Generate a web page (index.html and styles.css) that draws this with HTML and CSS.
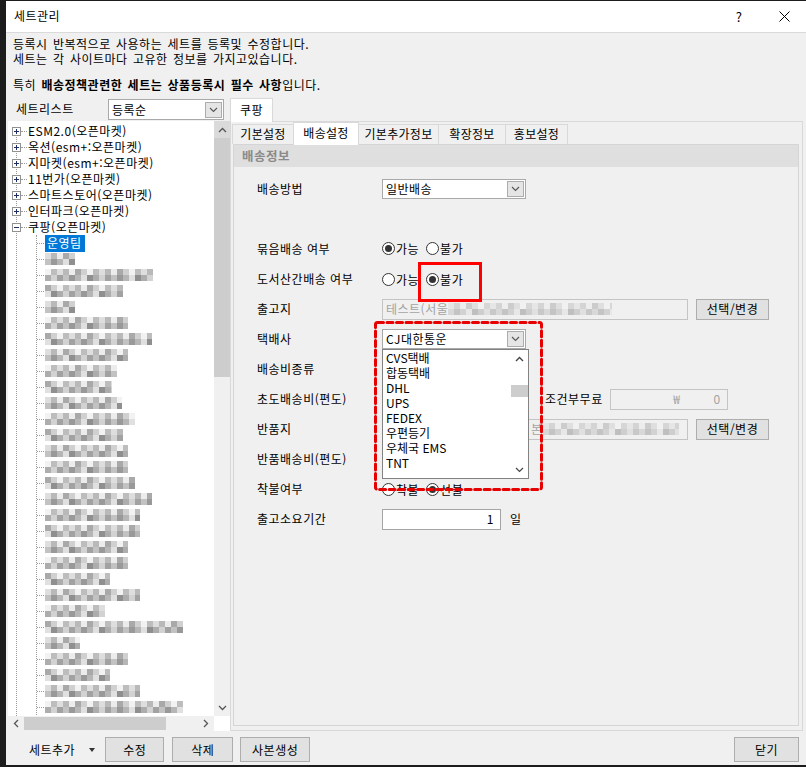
FILE: index.html
```html
<!DOCTYPE html>
<html lang="ko">

<head>
    <meta charset="UTF-8">
    <title>세트관리</title>
    <link rel="stylesheet" href="styles.css">
</head>

<body>
    <div class="window">
        <div class="titlebar">
            <span class="title">세트관리</span>
            <span class="cap help">?</span>
            <span class="cap close">
                <svg width="11" height="11" viewBox="0 0 11 11"><path d="M0.5 0.5l10 10M10.5 0.5l-10 10" stroke="#000" stroke-width="1" fill="none"/></svg>
            </span>
        </div>

        <div class="intro">
            <p>등록시 반복적으로 사용하는 세트를 등록및 수정합니다.</p>
            <p>세트는 각 사이트마다 고유한 정보를 가지고있습니다.</p>
            <p class="notice">특히 <b>배송정책관련한 세트는 상품등록시 필수 사항</b>입니다.</p>
        </div>

        <div class="main">
            <!-- 세트 리스트 -->
            <div class="left">
                <div class="list-head">
                    <span class="list-label">세트리스트</span>
                    <div class="combo sort">
                        <span class="combo-text">등록순</span>
                        <span class="drop"><svg width="9" height="6" viewBox="0 0 9 6"><path d="M1 1l3.5 3.5L8 1" fill="none" stroke="#555" stroke-width="1.1"/></svg></span>
                    </div>
                </div>
                <div class="tree">
                    <div class="tree-items">
                        <div class="node"><span class="exp plus"></span><span class="hline"></span><span class="node-text">ESM2.0(오픈마켓)</span></div>
                        <div class="node"><span class="exp plus"></span><span class="hline"></span><span class="node-text">옥션(esm+:오픈마켓)</span></div>
                        <div class="node"><span class="exp plus"></span><span class="hline"></span><span class="node-text">지마켓(esm+:오픈마켓)</span></div>
                        <div class="node"><span class="exp plus"></span><span class="hline"></span><span class="node-text">11번가(오픈마켓)</span></div>
                        <div class="node"><span class="exp plus"></span><span class="hline"></span><span class="node-text">스마트스토어(오픈마켓)</span></div>
                        <div class="node"><span class="exp plus"></span><span class="hline"></span><span class="node-text">인터파크(오픈마켓)</span></div>
                        <div class="node"><span class="exp"></span><span class="hline"></span><span class="node-text">쿠팡(오픈마켓)</span></div>
                        <div class="kids">
                            <div class="kid"><span class="hline"></span><span class="node-text selected">운영팀</span></div>
                            <div class="kid"><span class="hline"></span><span class="mosaic" style="width:30px"></span></div>
                            <div class="kid"><span class="hline"></span><span class="mosaic" style="width:108px"></span></div>
                            <div class="kid"><span class="hline"></span><span class="mosaic" style="width:78px"></span></div>
                            <div class="kid"><span class="hline"></span><span class="mosaic" style="width:30px"></span></div>
                            <div class="kid"><span class="hline"></span><span class="mosaic" style="width:83px"></span></div>
                            <div class="kid"><span class="hline"></span><span class="mosaic" style="width:107px"></span></div>
                            <div class="kid"><span class="hline"></span><span class="mosaic" style="width:83px"></span></div>
                            <div class="kid"><span class="hline"></span><span class="mosaic" style="width:72px"></span></div>
                            <div class="kid"><span class="hline"></span><span class="mosaic" style="width:67px"></span></div>
                            <div class="kid"><span class="hline"></span><span class="mosaic" style="width:77px"></span></div>
                            <div class="kid"><span class="hline"></span><span class="mosaic" style="width:90px"></span></div>
                            <div class="kid"><span class="hline"></span><span class="mosaic" style="width:78px"></span></div>
                            <div class="kid"><span class="hline"></span><span class="mosaic" style="width:83px"></span></div>
                            <div class="kid"><span class="hline"></span><span class="mosaic" style="width:83px"></span></div>
                            <div class="kid"><span class="hline"></span><span class="mosaic" style="width:90px"></span></div>
                            <div class="kid"><span class="hline"></span><span class="mosaic" style="width:107px"></span></div>
                            <div class="kid"><span class="hline"></span><span class="mosaic" style="width:95px"></span></div>
                            <div class="kid"><span class="hline"></span><span class="mosaic" style="width:95px"></span></div>
                            <div class="kid"><span class="hline"></span><span class="mosaic" style="width:83px"></span></div>
                            <div class="kid"><span class="hline"></span><span class="mosaic" style="width:83px"></span></div>
                            <div class="kid"><span class="hline"></span><span class="mosaic" style="width:65px"></span></div>
                            <div class="kid"><span class="hline"></span><span class="mosaic" style="width:95px"></span></div>
                            <div class="kid"><span class="hline"></span><span class="mosaic" style="width:60px"></span></div>
                            <div class="kid"><span class="hline"></span><span class="mosaic" style="width:138px"></span></div>
                            <div class="kid"><span class="hline"></span><span class="mosaic" style="width:35px"></span></div>
                            <div class="kid"><span class="hline"></span><span class="mosaic" style="width:83px"></span></div>
                            <div class="kid"><span class="hline"></span><span class="mosaic" style="width:65px"></span></div>
                            <div class="kid"><span class="hline"></span><span class="mosaic" style="width:95px"></span></div>
                            <div class="kid"><span class="hline"></span><span class="mosaic" style="width:138px"></span></div>
                        </div>
                    </div>
                    <div class="vscroll">
                        <span class="arrow up"><svg width="9" height="6" viewBox="0 0 9 6"><path d="M1 5l3.5-3.5L8 5" fill="none" stroke="#555" stroke-width="1.3"/></svg></span>
                        <span class="thumb"></span>
                        <span class="track"></span>
                        <span class="arrow"><svg width="9" height="6" viewBox="0 0 9 6"><path d="M1 1l3.5 3.5L8 1" fill="none" stroke="#555" stroke-width="1.3"/></svg></span>
                    </div>
                    <div class="hscroll">
                        <span class="arrow"><svg width="6" height="9" viewBox="0 0 6 9"><path d="M5 1L1.5 4.5 5 8" fill="none" stroke="#555" stroke-width="1.3"/></svg></span>
                        <span class="thumb"></span>
                        <span class="track"></span>
                        <span class="arrow"><svg width="6" height="9" viewBox="0 0 6 9"><path d="M1 1l3.5 3.5L1 8" fill="none" stroke="#555" stroke-width="1.3"/></svg></span>
                    </div>
                    <div class="corner"></div>
                </div>
            </div>

            <!-- 사이트별 설정 -->
            <div class="right">
                <div class="site-tabs">
                    <span class="site-tab">쿠팡</span>
                </div>
                <div class="site-page">
                    <div class="tabs">
                        <span class="tab">기본설정</span>
                        <span class="tab active">배송설정</span>
                        <span class="tab">기본추가정보</span>
                        <span class="tab">확장정보</span>
                        <span class="tab">홍보설정</span>
                    </div>
                    <div class="tab-page">
                        <div class="section-head">배송정보</div>
                        <div class="form">
                            <div class="row">
                                <span class="label">배송방법</span>
                                <div class="combo">
                                    <span class="combo-text">일반배송</span>
                                    <span class="drop"><svg width="9" height="6" viewBox="0 0 9 6"><path d="M1 1l3.5 3.5L8 1" fill="none" stroke="#555" stroke-width="1.1"/></svg></span>
                                </div>
                            </div>

                            <div class="row gap-before">
                                <span class="label">묶음배송 여부</span>
                                <span class="option"><span class="radio on"></span>가능</span>
                                <span class="option"><span class="radio"></span>불가</span>
                            </div>

                            <div class="row">
                                <span class="label">도서산간배송 여부</span>
                                <span class="option"><span class="radio"></span>가능</span>
                                <span class="option marked"><span class="radio on"></span>불가</span>
                            </div>

                            <div class="row">
                                <span class="label">출고지</span>
                                <span class="field disabled wide">테스트(서울<span class="mosaic light" style="width:164px"></span></span>
                                <span class="btn">선택/변경</span>
                            </div>

                            <div class="row">
                                <span class="label">택배사</span>
                                <div class="combo-wrap">
                                    <div class="combo">
                                        <span class="combo-text">CJ대한통운</span>
                                        <span class="drop"><svg width="9" height="6" viewBox="0 0 9 6"><path d="M1 1l3.5 3.5L8 1" fill="none" stroke="#555" stroke-width="1.1"/></svg></span>
                                    </div>
                                    <div class="droplist">
                                        <div class="items">
                                            <div>CVS택배</div>
                                            <div>합동택배</div>
                                            <div>DHL</div>
                                            <div>UPS</div>
                                            <div>FEDEX</div>
                                            <div>우편등기</div>
                                            <div>우체국 EMS</div>
                                            <div>TNT</div>
                                        </div>
                                        <div class="list-scroll">
                                            <span class="arrow"><svg width="9" height="6" viewBox="0 0 9 6"><path d="M1 5l3.5-3.5L8 5" fill="none" stroke="#444" stroke-width="1.4"/></svg></span>
                                            <span class="thumb"></span>
                                            <span class="track"></span>
                                            <span class="arrow"><svg width="9" height="6" viewBox="0 0 9 6"><path d="M1 1l3.5 3.5L8 1" fill="none" stroke="#444" stroke-width="1.2"/></svg></span>
                                        </div>
                                    </div>
                                    <svg class="dash-mark" width="169" height="170" viewBox="0 0 169 170"><rect x="1.5" y="1.5" width="166" height="167" rx="2" fill="none" stroke="#e60000" stroke-width="3" stroke-dasharray="6 3.5" stroke-linecap="round"/></svg>
                                </div>
                            </div>

                            <div class="row">
                                <span class="label">배송비종류</span>
                            </div>

                            <div class="row">
                                <span class="label">초도배송비(편도)</span>
                                <span class="cond">조건부무료</span>
                                <span class="field disabled money"><span>₩</span><span class="amount">0</span></span>
                            </div>

                            <div class="row">
                                <span class="label">반품지</span>
                                <span class="field disabled wide"><span class="hidden-part">본</span><span class="mosaic light" style="width:136px"></span></span>
                                <span class="btn">선택/변경</span>
                            </div>

                            <div class="row">
                                <span class="label">반품배송비(편도)</span>
                            </div>

                            <div class="row">
                                <span class="label">착불여부</span>
                                <span class="option"><span class="radio"></span>착불</span>
                                <span class="option"><span class="radio on"></span>선불</span>
                            </div>

                            <div class="row">
                                <span class="label">출고소요기간</span>
                                <span class="field days">1</span>
                                <span class="unit">일</span>
                            </div>
                        </div>
                    </div>
                </div>
            </div>
        </div>

        <div class="footer">
            <span class="add">세트추가</span>
            <span class="caret"></span>
            <span class="btn edit">수정</span>
            <span class="btn del">삭제</span>
            <span class="btn copy">사본생성</span>
            <span class="btn close-btn">닫기</span>
        </div>
    </div>
</body>

</html>
```

FILE: styles.css
```css
* {
    box-sizing: border-box;
}

body {
    margin: 0;
    background: #1c1c1c;
    font-family: "Noto Sans CJK KR", "Noto Sans", sans-serif;
    font-size: 12px;
    letter-spacing: 0.5px;
    color: #000;
}

p {
    margin: 0;
}

.window {
    margin: 1px 0 0 6px;
    width: 800px;
    height: 764px;
    background: #f0f0f0;
    display: flex;
    flex-direction: column;
}

/* title bar */
.titlebar {
    height: 32px;
    flex-shrink: 0;
    background: #fff;
    border-bottom: 1px solid #dadada;
    display: flex;
    align-items: center;
    padding-left: 8px;
}

.title {
    padding-bottom: 2px;
}

.cap {
    width: 46px;
    height: 31px;
    display: flex;
    align-items: center;
    justify-content: center;
}

.help {
    margin-left: auto;
    font-size: 13px;
    padding-bottom: 1px;
}

.close {
    width: 44px;
    padding-bottom: 1px;
}

/* intro text */
.intro {
    padding: 3px 7px 0;
    line-height: 15px;
    word-spacing: 1.5px;
}

.notice {
    margin-top: 11px;
}

/* main area */
.main {
    margin-top: 6px;
    padding-left: 2px;
    height: 633px;
    display: flex;
}

.left {
    width: 222px;
}

.right {
    width: 573px;
}

.list-head {
    height: 23px;
    display: flex;
    align-items: center;
}

.list-label {
    width: 100px;
    padding-left: 8px;
    padding-bottom: 2px;
}

.combo {
    width: 144px;
    height: 20px;
    background: #fff;
    border: 1px solid #a9a9a9;
    display: flex;
    align-items: center;
}

.combo.sort {
    width: 116px;
    height: 21px;
}

.combo-text {
    flex: 1;
    padding-left: 3px;
    padding-bottom: 1px;
}

.drop {
    width: 17px;
    height: 16px;
    margin-right: 1px;
    background: #e5e5e5;
    border: 1px solid #acacac;
    display: flex;
    align-items: center;
    justify-content: center;
}

/* tree */
.tree {
    height: 610px;
    background: #fff;
    display: grid;
    grid-template-columns: 206px 16px;
    grid-template-rows: 595px 15px;
}

.tree-items {
    position: relative;
    overflow: hidden;
    padding-top: 2px;
}

.tree-items::before {
    content: "";
    position: absolute;
    left: 8px;
    top: 10px;
    bottom: 0;
    border-left: 1px dotted #9a9a9a;
}

.node,
.kid {
    height: 16px;
    display: flex;
    align-items: center;
    white-space: nowrap;
}

.node {
    padding-left: 4px;
}

.exp {
    position: relative;
    width: 9px;
    height: 9px;
    background: #fff;
    border: 1px solid #919191;
    flex-shrink: 0;
}

.exp::before {
    content: "";
    position: absolute;
    left: 1px;
    top: 3px;
    width: 5px;
    height: 1px;
    background: #1d2b66;
}

.exp.plus::after {
    content: "";
    position: absolute;
    left: 3px;
    top: 1px;
    width: 1px;
    height: 5px;
    background: #1d2b66;
}

.hline {
    width: 6px;
    border-top: 1px dotted #9a9a9a;
    margin-right: 1px;
}

.node-text {
    line-height: 16px;
    padding-bottom: 1px;
}

.kids {
    position: relative;
}

.kids::before {
    content: "";
    position: absolute;
    left: 28px;
    top: 0;
    bottom: 0;
    border-left: 1px dotted #9a9a9a;
}

.kid {
    padding-left: 29px;
}

.kid .hline {
    width: 7px;
    margin-right: 1px;
}

.selected {
    background: #0078d7;
    color: #fff;
    padding: 0 3px 1px 2px;
}

/* blurred (pixelated) names */
.mosaic {
    display: inline-block;
    height: 12px;
    background-image:
        repeating-linear-gradient(90deg, #dedede 0 6px, #b9b9b9 6px 12px, #ececec 12px 18px, #a9a9a9 18px 24px, #d0d0d0 24px 30px, #f2f2f2 30px 36px, #bdbdbd 36px 42px),
        repeating-linear-gradient(90deg, #c2c2c2 0 6px, #999 6px 12px, #b6b6b6 12px 18px, #e0e0e0 18px 24px, #8f8f8f 24px 30px, #adadad 30px 36px, #d2d2d2 36px 42px, #a2a2a2 42px 48px);
    background-size: 42px 6px, 48px 12px;
    background-repeat: repeat-x;
}

.kid:nth-child(3n) .mosaic {
    background-position: 12px 0, 18px 0;
}

.kid:nth-child(3n+1) .mosaic {
    background-position: 24px 0, 30px 0;
}

.mosaic.light {
    opacity: 0.5;
    vertical-align: middle;
}

.vscroll {
    background: #f0f0f0;
    display: flex;
    flex-direction: column;
}

.vscroll .arrow {
    height: 17px;
    display: flex;
    align-items: center;
    justify-content: center;
    flex-shrink: 0;
}

.vscroll .up {
    background: #dadada;
}

.vscroll .thumb {
    height: 239px;
    background: #cdcdcd;
}

.vscroll .track,
.hscroll .track {
    flex: 1;
}

.hscroll {
    background: #f0f0f0;
    display: flex;
    align-items: center;
}

.hscroll .arrow {
    width: 16px;
    display: flex;
    justify-content: center;
}

.hscroll .thumb {
    width: 142px;
    height: 13px;
    background: #cdcdcd;
}

.corner {
    background: #fff;
}

/* site tabs */
.site-tabs {
    height: 23px;
    display: flex;
    align-items: flex-end;
}

.site-tab {
    position: relative;
    z-index: 1;
    width: 43px;
    height: 24px;
    margin-bottom: -1px;
    padding-left: 9px;
    line-height: 22px;
    background: #fff;
    border: 1px solid #d9d9d9;
    border-bottom: none;
}

.site-page {
    height: 610px;
    border: 1px solid #d9d9d9;
    padding: 1px 0 0 1px;
}

.tabs {
    height: 21px;
    display: flex;
    align-items: flex-end;
}

.tab {
    height: 20px;
    line-height: 18px;
    text-align: center;
    background: #f0f0f0;
    border: 1px solid #d9d9d9;
    border-bottom: none;
    margin-right: -1px;
    letter-spacing: 0.3px;
}

.tab:nth-child(1) { width: 62px; }
.tab:nth-child(2) { width: 66px; }
.tab:nth-child(3) { width: 81px; }
.tab:nth-child(4) { width: 68px; }
.tab:nth-child(5) { width: 63px; }

.tab.active {
    position: relative;
    z-index: 1;
    height: 23px;
    margin-bottom: -1px;
    line-height: 19px;
    background: #fff;
}

.tab-page {
    margin-left: 1px;
    width: 566px;
    height: 582px;
    border: 1px solid #d5d5d5;
}

.section-head {
    height: 22px;
    line-height: 21px;
    padding-left: 8px;
    background: #dfdfdf;
    color: #8a8a8a;
    font-weight: bold;
    font-size: 12.5px;
}

/* form */
.form {
    padding: 7px 0 0 23px;
}

.row {
    height: 30px;
    display: flex;
    align-items: center;
}

.row.gap-before {
    margin-top: 29px;
    height: 31px;
}

.label {
    width: 125px;
    flex-shrink: 0;
    padding-bottom: 1px;
}

.option {
    position: relative;
    display: inline-flex;
    align-items: center;
    gap: 1px;
    margin-right: 7px;
    height: 16px;
}

.radio {
    position: relative;
    width: 13px;
    height: 13px;
    border-radius: 50%;
    border: 1px solid #333;
    background: #fff;
}

.radio.on::after {
    content: "";
    position: absolute;
    left: 2px;
    top: 2px;
    width: 7px;
    height: 7px;
    border-radius: 50%;
    background: #333;
}

.option.marked::before {
    content: "";
    position: absolute;
    left: -8px;
    top: -9px;
    width: 58px;
    height: 34px;
    border: 3px solid #f00;
}

.field {
    height: 21px;
    border: 1px solid #a5a5a5;
    background: #fff;
    display: flex;
    align-items: center;
    padding: 0 3px 1px;
    white-space: nowrap;
    overflow: hidden;
}

.field.disabled {
    background: #f0f0f0;
    border-color: #c4c4c4;
    color: #a3a3a3;
}

.field.wide {
    width: 306px;
}

.btn {
    height: 21px;
    width: 73px;
    margin-left: 8px;
    background: #e1e1e1;
    border: 1px solid #adadad;
    display: flex;
    align-items: center;
    justify-content: center;
    padding-bottom: 1px;
}

.combo-wrap {
    position: relative;
}

.droplist {
    position: absolute;
    z-index: 2;
    left: 0;
    top: 20px;
    width: 147px;
    height: 130px;
    background: #fff;
    border: 1px solid #828282;
    display: flex;
}

.items {
    flex: 1;
    padding-left: 3px;
    line-height: 15px;
    letter-spacing: 0;
}

.list-scroll {
    width: 17px;
    display: flex;
    flex-direction: column;
    background: #fff;
}

.list-scroll .arrow {
    height: 17px;
    display: flex;
    align-items: center;
    justify-content: center;
}

.list-scroll .thumb {
    margin-top: 18px;
    height: 12px;
    background: #cdcdcd;
}

.list-scroll .track {
    flex: 1;
}

.dash-mark {
    position: absolute;
    z-index: 3;
    left: -8px;
    top: -8px;
}

.cond {
    margin-left: 163px;
    padding-bottom: 1px;
}

.field.money {
    width: 118px;
    margin-left: 7px;
    justify-content: flex-end;
    padding-right: 6px;
}

.amount {
    margin-left: 33px;
}

.hidden-part {
    margin-left: 145px;
}

.field.days {
    width: 119px;
    justify-content: flex-end;
    padding-right: 6px;
}

.unit {
    margin-left: 9px;
    padding-bottom: 1px;
}

/* footer */
.footer {
    margin-top: 6px;
    height: 25px;
    display: flex;
    align-items: center;
    padding: 0 7px 0 23px;
}

.add {
    padding-bottom: 1px;
}

.caret {
    margin-left: 14px;
    border-left: 3.5px solid transparent;
    border-right: 3.5px solid transparent;
    border-top: 4px solid #333;
}

.footer .btn {
    height: 25px;
}

.btn.edit {
    width: 59px;
    margin-left: 10px;
}

.btn.del {
    width: 61px;
}

.btn.copy {
    width: 70px;
    margin-left: 7px;
}

.btn.close-btn {
    width: 65px;
    margin-left: auto;
}
```
